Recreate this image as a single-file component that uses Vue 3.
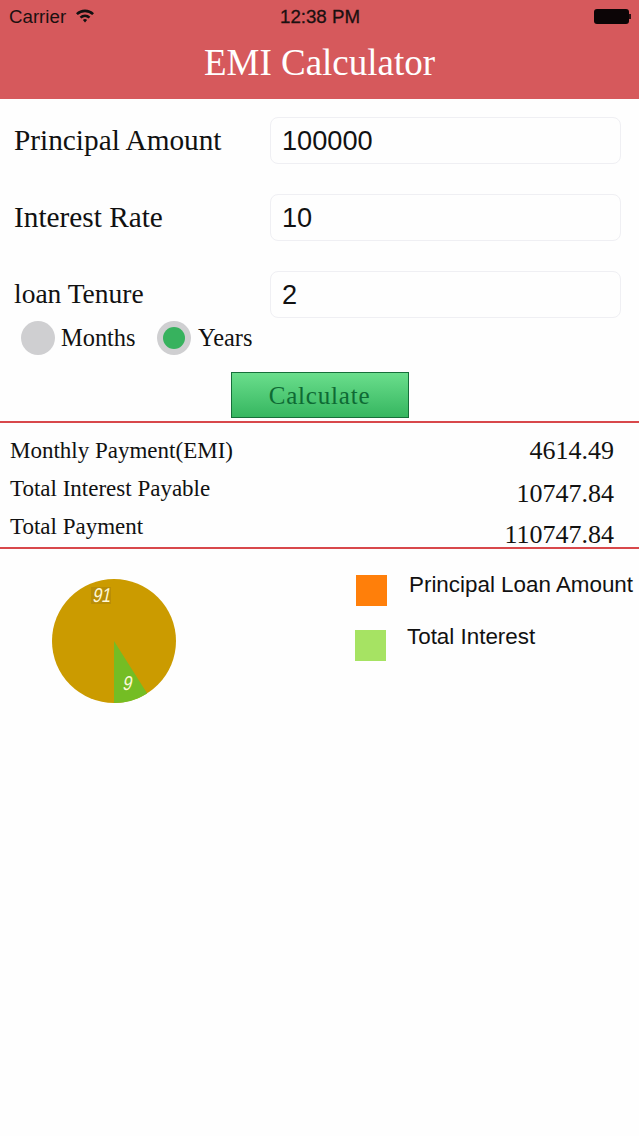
<script setup>
const inputs = [
  { label: 'Principal Amount', value: '100000', small: false },
  { label: 'Interest Rate', value: '10', small: false },
  { label: 'loan Tenure', value: '2', small: true }
]

const results = [
  { label: 'Monthly Payment(EMI)', value: '4614.49', shift: 'first' },
  { label: 'Total Interest Payable', value: '10747.84', shift: 'second' },
  { label: 'Total Payment', value: '110747.84', shift: 'third' }
]
</script>

<template>
  <div class="page">
    <header class="header">
      <div class="status">
        <div class="status-left">
          <span>Carrier</span>
          <svg class="wifi" width="20" height="15" viewBox="0 0 20 15">
            <path d="M1 5.2 A13 13 0 0 1 19 5.2 L17.2 7 A10.5 10.5 0 0 0 2.8 7 Z" fill="#111" />
            <path d="M4.6 8.7 A8 8 0 0 1 15.4 8.7 L13.6 10.5 A5.5 5.5 0 0 0 6.4 10.5 Z" fill="#111" />
            <path d="M7.9 12 A3.2 3.2 0 0 1 12.1 12 L10 14.4 Z" fill="#111" />
          </svg>
        </div>
        <span class="time">12:38 PM</span>
        <div class="battery"><i class="cell"></i><i class="nub"></i></div>
      </div>
      <h1 class="title">EMI Calculator</h1>
    </header>

    <section class="form">
      <div v-for="item in inputs" :key="item.label" class="field">
        <label class="field-label" :class="{ small: item.small }">{{ item.label }}</label>
        <div class="field-input">{{ item.value }}</div>
      </div>
      <div class="radios">
        <span class="radio"></span>
        <span class="radio-text months">Months</span>
        <span class="radio checked"><i></i></span>
        <span class="radio-text years">Years</span>
      </div>
      <div class="actions">
        <button class="calc" type="button">Calculate</button>
      </div>
    </section>

    <section class="results">
      <div v-for="row in results" :key="row.label" class="result" :class="row.shift">
        <span class="result-label">{{ row.label }}</span>
        <span class="result-value">{{ row.value }}</span>
      </div>
    </section>

    <section class="chart">
      <svg class="pie" width="124" height="124" viewBox="0 0 124 124">
        <circle cx="62" cy="62" r="62" fill="#cb9b00" />
        <path d="M62 62 L62 124 A62 62 0 0 0 95.2 114.4 Z" fill="#74bd24" />
        <rect x="39" y="8" width="20" height="17" fill="#b98d06" />
        <text class="pie-num" transform="translate(40 23) skewX(-12) scale(0.82 1)">91</text>
        <text class="pie-num" transform="translate(70 111) skewX(-12) scale(0.82 1)">9</text>
      </svg>
      <div class="legend">
        <div class="legend-row">
          <span class="swatch orange"></span>
          <span class="legend-text">Principal Loan Amount</span>
        </div>
        <div class="legend-row second">
          <span class="swatch green"></span>
          <span class="legend-text">Total Interest</span>
        </div>
      </div>
    </section>
  </div>
</template>

<style>
html,
body {
  margin: 0;
  background: #fff;
}
</style>

<style scoped>
.page {
  width: 639px;
  height: 1136px;
  overflow: hidden;
  background: #fefefe;
  font-family: "Liberation Serif", serif;
  color: #111;
}

.header {
  height: 99px;
  background: #d6595c;
  box-sizing: border-box;
}

.status {
  height: 33px;
  padding: 0 8px 0 9px;
  display: grid;
  grid-template-columns: 1fr auto 1fr;
  align-items: center;
  font-family: "Liberation Sans", sans-serif;
  font-size: 18.7px;
  color: #1a1010;
}

.status-left {
  display: flex;
  align-items: center;
  gap: 9px;
}

.wifi {
  margin-top: -2px;
}

.time {
  font-weight: 500;
  -webkit-text-stroke: 0.3px #1a1010;
}

.battery {
  display: flex;
  align-items: center;
  justify-content: flex-end;
}

.cell {
  display: block;
  width: 35px;
  height: 15px;
  background: #0c0506;
  border-radius: 3px;
}

.nub {
  display: block;
  width: 2px;
  height: 5px;
  background: #2a1012;
}

.title {
  margin: 0;
  text-align: center;
  font-size: 37px;
  line-height: 60px;
  font-weight: 400;
  color: #fff;
}

.form {
  padding-top: 18px;
}

.field {
  height: 47px;
  margin-bottom: 30px;
  padding: 0 18px 0 14px;
  display: flex;
  align-items: center;
}

.field:nth-child(3) {
  margin-bottom: 0;
}

.field-label {
  width: 256px;
  font-size: 29.3px;
  margin-top: -1px;
}

.field-label.small {
  font-size: 27.5px;
}

.field-input {
  flex: 1;
  height: 47px;
  box-sizing: border-box;
  padding-left: 11px;
  border: 1px solid #efeff3;
  border-radius: 8px;
  font-family: "Liberation Sans", sans-serif;
  font-size: 27.2px;
  line-height: 46px;
  color: #111;
}

.radios {
  height: 36px;
  padding-left: 21px;
  display: flex;
  align-items: center;
  margin-top: 2px;
}

.radio {
  width: 34px;
  height: 34px;
  border-radius: 50%;
  background: #cfcfd1;
  display: flex;
  align-items: center;
  justify-content: center;
  flex: none;
}

.radio i {
  display: block;
  width: 22px;
  height: 22px;
  border-radius: 50%;
  background: #37b25e;
}

.radio-text {
  font-size: 24.4px;
}

.radio-text.months {
  margin-left: 6px;
  width: 96px;
}

.radio-text.years {
  margin-left: 7px;
}

.actions {
  display: flex;
  justify-content: center;
  margin-top: 16px;
}

.calc {
  width: 178px;
  height: 46px;
  padding: 2px 0 0;
  box-sizing: border-box;
  border: 1px solid #166f3a;
  background: linear-gradient(#6ade8c, #36b660);
  color: #0e6a34;
  font-family: "Liberation Serif", serif;
  font-size: 25px;
  letter-spacing: 0.8px;
}

.results {
  margin-top: 3px;
  height: 128px;
  box-sizing: border-box;
  border-top: 2px solid #d8484b;
  border-bottom: 2px solid #d8484b;
  padding: 0 25px 0 10px;
}

.result {
  display: flex;
  justify-content: space-between;
  height: 38px;
}

.first {
  margin-top: 15px;
}

.result-label {
  font-size: 23px;
  line-height: 26px;
}

.result-value {
  font-size: 26px;
  line-height: 30px;
}

.first .result-value {
  margin-top: -2px;
}

.second .result-value {
  margin-top: 3px;
}

.third .result-value {
  margin-top: 6px;
}

.chart {
  padding: 30px 0 0 52px;
  display: flex;
}

.pie-num {
  font-family: "Liberation Sans", sans-serif;
  font-size: 20px;
  fill: #fff8d8;
}

.pie {
  flex: none;
}

.legend {
  margin: -4px 0 0 180px;
  font-family: "Liberation Sans", sans-serif;
}

.legend-row {
  display: flex;
  height: 31px;
}

.legend-row.second {
  margin: 24px 0 0 -1px;
}

.swatch {
  width: 31px;
  height: 31px;
  flex: none;
}

.orange {
  background: #ff7f0a;
}

.green {
  background: #a6e363;
}

.legend-text {
  margin-left: 22px;
  font-size: 22.4px;
  line-height: 20px;
  white-space: nowrap;
}

.second .legend-text {
  margin: -3px 0 0 21px;
}
</style>
